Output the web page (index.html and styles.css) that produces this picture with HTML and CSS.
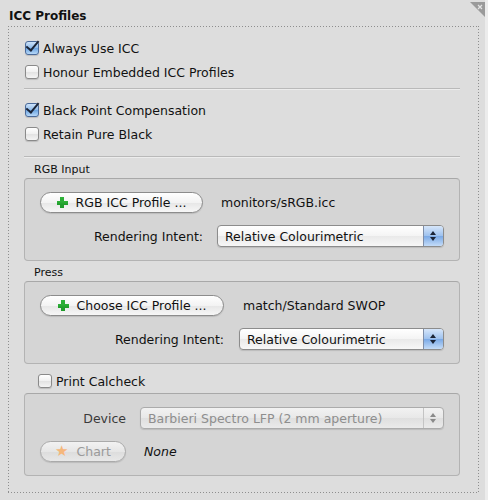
FILE: index.html
```html
<!DOCTYPE html>
<html lang="en">
<head>
    <meta charset="UTF-8">
    <title>ICC Profiles</title>
    <link rel="stylesheet" href="styles.css">
</head>
<body>
    <div class="panel">
        <div class="title">ICC Profiles</div>
        <svg class="corner" width="15" height="15" viewBox="0 0 15 15">
            <polygon points="0,0 15,0 15,15" fill="#9a9a9a"/>
            <path d="M8 3 L12 7 M12 3 L8 7" stroke="#e4e4e4" stroke-width="1.2"/>
        </svg>

        <div class="frame">
            <label class="check"><span class="box on"></span>Always Use ICC</label>
            <label class="check"><span class="box"></span>Honour Embedded ICC Profiles</label>
            <div class="sep"></div>
            <label class="check first"><span class="box on"></span>Black Point Compensation</label>
            <label class="check"><span class="box"></span>Retain Pure Black</label>
            <div class="sep sep2"></div>

            <div class="group-label">RGB Input</div>
            <div class="group rgb">
                <button class="btn"><span class="plus"></span>RGB ICC Profile ...</button>
                <span class="value">monitors/sRGB.icc</span>
                <span class="lbl">Rendering Intent:</span>
                <div class="select"><span>Relative Colourimetric</span><span class="arrows"></span></div>
            </div>

            <div class="group-label">Press</div>
            <div class="group press">
                <button class="btn"><span class="plus"></span>Choose ICC Profile ...</button>
                <span class="value">match/Standard SWOP</span>
                <span class="lbl">Rendering Intent:</span>
                <div class="select"><span>Relative Colourimetric</span><span class="arrows"></span></div>
            </div>

            <label class="check calcheck"><span class="box"></span>Print Calcheck</label>
            <div class="group calc">
                <span class="lbl dim">Device</span>
                <div class="select disabled"><span>Barbieri Spectro LFP (2 mm aperture)</span><span class="arrows"></span></div>
                <button class="btn disabled"><span class="star">★</span>Chart</button>
                <span class="value none">None</span>
            </div>
        </div>
    </div>
</body>
</html>
```

FILE: styles.css
```css
* {
    margin: 0;
    padding: 0;
    box-sizing: border-box;
}
body {
    width: 488px;
    height: 500px;
    background: #ececec;
    font-family: "DejaVu Sans", "Liberation Sans", sans-serif;
    font-size: 12.5px;
    color: #111;
    overflow: hidden;
}
.panel {
    position: relative;
    width: 485px;
    height: 500px;
    background: #dddddd;
    padding: 8px 0 0 8px;
}
.title {
    font-weight: bold;
    font-size: 12px;
    line-height: 16px;
    padding-left: 1px;
    margin-bottom: 2px;
}
.corner {
    position: absolute;
    top: 2px;
    left: 470px;
}
.frame {
    width: 471px;
    height: 467px;
    padding: 10px 19px 0 16px;
    background:
        repeating-linear-gradient(to right, #8e8e8e 0 1px, transparent 1px 3px) left top / 100% 1px no-repeat,
        repeating-linear-gradient(to right, #8e8e8e 0 1px, transparent 1px 3px) left bottom / 100% 1px no-repeat,
        repeating-linear-gradient(to bottom, #8e8e8e 0 1px, transparent 1px 3px) left top / 1px 100% no-repeat,
        repeating-linear-gradient(to bottom, #8e8e8e 0 1px, transparent 1px 3px) right top / 1px 100% no-repeat;
}
.check {
    display: flex;
    align-items: center;
    gap: 4px;
    height: 24px;
    padding-left: 1px;
}
.check.first {
    margin-top: 8px;
}
.check.calcheck {
    margin-top: 5px;
    padding-left: 14px;
}
.box {
    width: 14px;
    height: 14px;
    border: 1px solid #8a8a8a;
    border-radius: 3px;
    background: linear-gradient(#ffffff, #f0f0f0 50%, #e2e2e2 51%, #f4f4f4);
    box-shadow: 0 1px 1px rgba(0,0,0,0.15);
    position: relative;
}
.box.on {
    border-color: #4a6a9a;
    background: linear-gradient(#cde3fa, #8fbbea 50%, #6aa3e0 51%, #b7d8f8);
}
.box.on::after {
    content: "";
    position: absolute;
    left: 3px;
    top: -4px;
    width: 5px;
    height: 11px;
    border: solid #1b2436;
    border-width: 0 2.5px 2.5px 0;
    transform: rotate(40deg);
}
.sep {
    height: 2px;
    border-top: 1px solid #b9b9b9;
    border-bottom: 1px solid #ececec;
    margin-top: 4px;
}
.sep2 {
    margin-top: 10px;
}
.group-label {
    font-size: 11px;
    line-height: 14px;
    padding-left: 10px;
    margin-top: 5px;
    margin-bottom: 1px;
}
.group {
    display: grid;
    align-items: center;
    align-content: start;
    row-gap: 12px;
    height: 83px;
    padding: 13px 15px 0 15px;
    background: #d5d5d5;
    border: 1px solid #b3b3b3;
    border-top-color: #a8a8a8;
    border-radius: 4px;
}
.group.rgb {
    grid-template-columns: 163px 1fr;
    column-gap: 14px;
}
.group.press {
    grid-template-columns: 184px 1fr;
    column-gap: 15px;
}
.group.calc {
    grid-template-columns: 86px 1fr;
    column-gap: 14px;
}
.btn {
    height: 21px;
    display: flex;
    align-items: center;
    justify-content: center;
    gap: 8px;
    font-family: inherit;
    font-size: 12.5px;
    color: #111;
    border: 1px solid #8c8c8c;
    border-radius: 11px;
    background: linear-gradient(#ffffff, #f3f3f3 50%, #e6e6e6 51%, #f7f7f7);
    box-shadow: 0 1px 1px rgba(0,0,0,0.12);
}
.plus {
    width: 11px;
    height: 11px;
    background:
        linear-gradient(#2fb33a, #1f9a2a) center / 11px 4px no-repeat,
        linear-gradient(#2fb33a, #1f9a2a) center / 4px 11px no-repeat;
}
.btn.disabled {
    color: #9a9a9a;
    border-color: #aaaaaa;
    background: linear-gradient(#f2f2f2, #e6e6e6 50%, #dcdcdc 51%, #e8e8e8);
}
.star {
    color: #f5b77c;
    font-size: 15px;
    line-height: 1;
}
.value {
    padding-left: 4px;
}
.value.none {
    font-style: italic;
}
.lbl {
    text-align: right;
}
.lbl.dim {
    color: #3a3a3a;
}
.select {
    height: 22px;
    display: flex;
    align-items: center;
    border: 1px solid #8c8c8c;
    border-radius: 4px;
    background: linear-gradient(#ffffff, #f4f4f4 50%, #e9e9e9 51%, #f7f7f7);
    box-shadow: 0 1px 1px rgba(0,0,0,0.12);
    overflow: hidden;
}
.select span:first-child {
    flex: 1;
    padding-left: 7px;
}
.arrows {
    width: 20px;
    height: 100%;
    border-left: 1px solid #7f8ea8;
    background: linear-gradient(#d6e6fa, #9dc1ee 50%, #7aa9e6 51%, #c4dcf8);
    position: relative;
}
.arrows::before,
.arrows::after {
    content: "";
    position: absolute;
    left: 6px;
    border-left: 3px solid transparent;
    border-right: 3px solid transparent;
}
.arrows::before {
    top: 5px;
    border-bottom: 4px solid #1b2436;
}
.arrows::after {
    top: 11px;
    border-top: 4px solid #1b2436;
}
.select.disabled {
    color: #8e8e8e;
    border-color: #ababab;
    background: linear-gradient(#f2f2f2, #e8e8e8 50%, #dfdfdf 51%, #eaeaea);
}
.select.disabled .arrows {
    border-left-color: #c4c4c4;
    background: transparent;
}
.select.disabled .arrows::before {
    border-bottom-color: #8a8a8a;
}
.select.disabled .arrows::after {
    border-top-color: #8a8a8a;
}
```
